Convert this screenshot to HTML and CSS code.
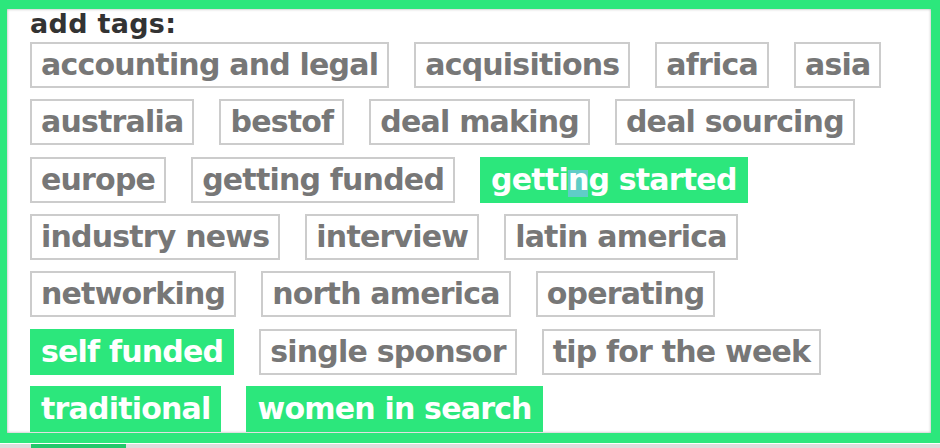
FILE: index.html
```html
<!DOCTYPE html>
<html lang="en">
<head>
    <meta charset="UTF-8">
    <meta name="viewport" content="width=device-width, initial-scale=1.0">
    <title>add tags</title>
    <link rel="stylesheet" href="styles.css">
</head>
<body>

    <div class="tag-panel">
        <h3 class="tag-title">add tags:</h3>
        <div class="tag-list">
            <span class="tag">accounting and legal</span>
            <span class="tag">acquisitions</span>
            <span class="tag">africa</span>
            <span class="tag">asia</span>
            <span class="tag">australia</span>
            <span class="tag">bestof</span>
            <span class="tag">deal making</span>
            <span class="tag">deal sourcing</span>
            <span class="tag">europe</span>
            <span class="tag">getting funded</span>
            <span class="tag tag-selected">getti<span class="caret">n</span>g started</span>
            <span class="tag">industry news</span>
            <span class="tag">interview</span>
            <span class="tag">latin america</span>
            <span class="tag">networking</span>
            <span class="tag">north america</span>
            <span class="tag">operating</span>
            <span class="tag tag-selected">self funded</span>
            <span class="tag">single sponsor</span>
            <span class="tag">tip for the week</span>
            <span class="tag tag-selected">traditional</span>
            <span class="tag tag-selected">women in search</span>
        </div>
    </div>

    <div class="panel-footer">
        <div class="footer-btn"></div>
    </div>

</body>
</html>
```

FILE: styles.css
```css
body {
    margin: 0;
    background-color: #fff;
    font-family: "DejaVu Sans", sans-serif;
    font-weight: bold;
}

.tag-panel {
    border-style: solid;
    border-color: #2ce77c;
    border-width: 9px 9px 10px 7px;
    padding: 0 10px 1px 23px;
    background-color: #fff;
    box-shadow: inset 0 0 3px rgba(0, 0, 0, 0.35);
}

.tag-title {
    margin: 0 0 4px;
    font-size: 27px;
    line-height: 29px;
    letter-spacing: 0.3px;
    color: #333;
}

.tag-list {
    display: flex;
    flex-wrap: wrap;
    column-gap: 25px;
    row-gap: 11.33px;
}

.tag {
    padding: 0 9px;
    font-size: 30px;
    line-height: 42px;
    letter-spacing: -0.8px;
    white-space: nowrap;
    color: #777;
    border: 2px solid #ccc;
}

.tag-selected {
    color: #fff;
    background-color: #2ce77c;
    border-color: #2ce77c;
}

.caret {
    background: linear-gradient(to bottom, transparent 8px, #5fcdc7 8px);
}

.panel-footer {
    height: 5px;
    background-color: #ddd;
    padding-left: 31px;
}

.footer-btn {
    width: 95px;
    height: 4px;
    margin-top: 1px;
    background-color: #22c86b;
}
```
